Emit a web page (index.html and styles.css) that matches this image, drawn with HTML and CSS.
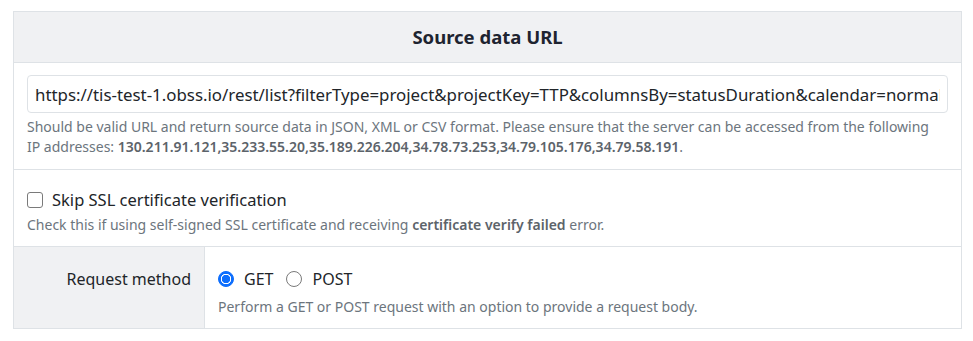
FILE: index.html
```html
<!DOCTYPE html>
<html lang="en">

<head>
  <meta charset="UTF-8">
  <meta name="viewport" content="width=device-width, initial-scale=1.0">
  <title>Source data URL</title>
  <link rel="stylesheet" href="styles.css">
</head>

<body>
  <table class="settings">
    <thead>
      <tr>
        <th colspan="2" class="title">Source data URL</th>
      </tr>
    </thead>
    <tbody>
      <tr>
        <td colspan="2" class="url-cell">
          <input class="url-input" type="text" value="https://tis-test-1.obss.io/rest/list?filterType=project&amp;projectKey=TTP&amp;columnsBy=statusDuration&amp;calendar=normalHours">
          <p class="hint">Should be valid URL and return source data in JSON, XML or CSV format. Please ensure that the server can be accessed from the following IP addresses: <b>130.211.91.121,35.233.55.20,35.189.226.204,34.78.73.253,34.79.105.176,34.79.58.191</b>.</p>
        </td>
      </tr>
      <tr>
        <td colspan="2" class="ssl-cell">
          <label class="check">
            <input type="checkbox" class="box">
            <span>Skip SSL certificate verification</span>
          </label>
          <p class="hint">Check this if using self-signed SSL certificate and receiving <b>certificate verify failed</b> error.</p>
        </td>
      </tr>
      <tr>
        <th class="side-label">Request method</th>
        <td class="method-cell">
          <div class="radios">
            <label class="check">
              <input type="radio" name="method" class="radio" checked>
              <span>GET</span>
            </label>
            <label class="check">
              <input type="radio" name="method" class="radio">
              <span>POST</span>
            </label>
          </div>
          <p class="hint">Perform a GET or POST request with an option to provide a request body.</p>
        </td>
      </tr>
    </tbody>
  </table>
</body>

</html>
```

FILE: styles.css
```css
body {
  margin: 0;
  padding: 11px 11px 0 13px;
  font-family: "Noto Sans", "Open Sans", sans-serif;
  font-size: 16px;
  color: #212529;
  background: #fff;
}

table.settings {
  inline-size: 949px;
  border-collapse: collapse;
}

table.settings th,
table.settings td {
  border: 1px solid #dee2e6;
  padding: 12px 13px;
  vertical-align: top;
  text-align: left;
}

th.title {
  background: #f0f1f3;
  text-align: center !important;
  font-size: 18.5px;
  font-weight: 700;
  line-height: 26px;
  padding-block: 12px !important;
  color: #1e2430;
}

.url-input {
  display: block;
  box-sizing: border-box;
  inline-size: 100%;
  block-size: 38px;
  margin: 0;
  padding: 6px 7px;
  border: 1px solid #dee2e6;
  border-radius: 4px;
  font: inherit;
  font-size: 16.85px;
  color: #212529;
  background: #fff;
  outline: none;
}

p.hint {
  margin: 4px 0 0;
  font-size: 14px;
  line-height: 20px;
  color: #6c757d;
}

p.hint b {
  font-weight: 600;
  color: #5c636a;
}

td.url-cell {
  padding-block-end: 12px !important;
}

td.url-cell p.hint {
  padding-inline-end: 10px;
}

td.ssl-cell {
  padding-block: 18px 11px !important;
}

td.ssl-cell p.hint {
  margin-block-start: 2px;
}

label.check {
  display: inline-flex;
  align-items: center;
  gap: 9px;
  line-height: 24px;
  font-size: 16.5px;
}

input.box,
input.radio {
  appearance: none;
  margin: 0;
  inline-size: 16px;
  block-size: 16px;
  border: 1px solid #7a7a7a;
  background: #fff;
  flex: none;
}

input.box {
  border-radius: 3px;
}

input.radio {
  border-radius: 50%;
}

input.radio:checked {
  border: 1px solid #0d6efd;
  background: radial-gradient(circle, #0d6efd 0 4px, #fff 4.5px 5px, #0d6efd 5.5px);
}

th.side-label {
  inline-size: 164px;
  background: #f0f1f3;
  font-weight: 400;
  text-align: right !important;
  line-height: 24px;
  padding-block-start: 20px !important;
}

td.method-cell {
  padding-block: 20px 11px !important;
}

.radios {
  display: flex;
  gap: 13px;
}

.radios label.check {
  gap: 10px;
  font-size: 16px;
}

td.method-cell p.hint {
  margin-block-start: 6px;
}
```
